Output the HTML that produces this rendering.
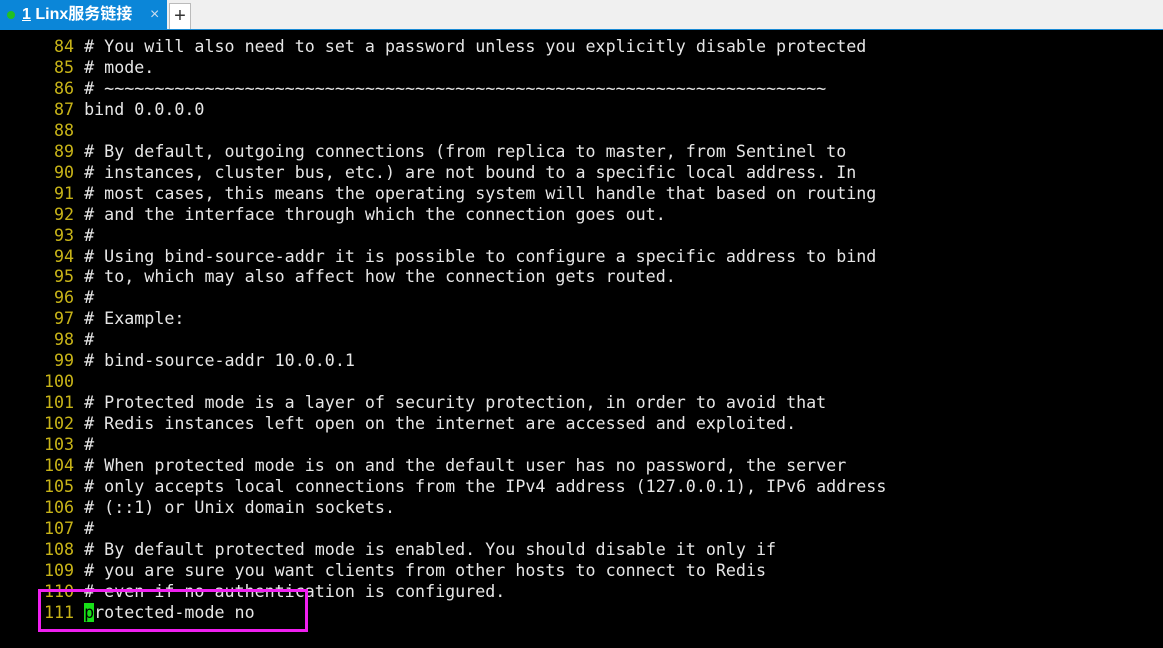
<!DOCTYPE html><html><head><meta charset="utf-8"><style>
body{margin:0;width:1163px;height:648px;background:#000;overflow:hidden;position:relative;font-family:"Liberation Sans","Noto Sans CJK SC",sans-serif}
.bar{position:absolute;left:0;top:0;width:1163px;height:29px;background:#f0f0f0;border-bottom:1px solid #1a8ad4}
.tab{position:absolute;left:0;top:0;width:167px;height:30px;background:#0b86d8;color:#fff;font-weight:bold;font-size:16px;line-height:30px}
.dot{position:absolute;left:7px;top:11px;width:8px;height:8px;border-radius:50%;background:#22c022}
.plus{position:absolute;left:169px;top:3px;width:20px;height:25px;background:#fff;border:1px solid #bbb;border-bottom:none;font-size:20px;line-height:24px;text-align:center;color:#333}
pre{position:absolute;left:44px;top:37px;margin:0;font-family:"DejaVu Sans Mono","Liberation Mono",monospace;font-size:16.67px;line-height:20.96px;color:#e6e6e6}
.n{color:#c8b418}
.cur{background:#18e018;color:#000}
.box{position:absolute;left:38px;top:589px;width:264px;height:37px;border:3px solid #f020f0}
</style></head><body>
<div class="bar"></div>
<div class="tab"><span class="dot"></span><span style="position:absolute;left:22px"><u>1</u> Linx服务链接</span><span style="position:absolute;left:150px;font-weight:normal;color:#cde">×</span></div>
<div class="plus">+</div>
<pre><span class="n"> 84</span> # You will also need to set a password unless you explicitly disable protected
<span class="n"> 85</span> # mode.
<span class="n"> 86</span> # ~~~~~~~~~~~~~~~~~~~~~~~~~~~~~~~~~~~~~~~~~~~~~~~~~~~~~~~~~~~~~~~~~~~~~~~~
<span class="n"> 87</span> bind 0.0.0.0
<span class="n"> 88</span>
<span class="n"> 89</span> # By default, outgoing connections (from replica to master, from Sentinel to
<span class="n"> 90</span> # instances, cluster bus, etc.) are not bound to a specific local address. In
<span class="n"> 91</span> # most cases, this means the operating system will handle that based on routing
<span class="n"> 92</span> # and the interface through which the connection goes out.
<span class="n"> 93</span> #
<span class="n"> 94</span> # Using bind-source-addr it is possible to configure a specific address to bind
<span class="n"> 95</span> # to, which may also affect how the connection gets routed.
<span class="n"> 96</span> #
<span class="n"> 97</span> # Example:
<span class="n"> 98</span> #
<span class="n"> 99</span> # bind-source-addr 10.0.0.1
<span class="n">100</span>
<span class="n">101</span> # Protected mode is a layer of security protection, in order to avoid that
<span class="n">102</span> # Redis instances left open on the internet are accessed and exploited.
<span class="n">103</span> #
<span class="n">104</span> # When protected mode is on and the default user has no password, the server
<span class="n">105</span> # only accepts local connections from the IPv4 address (127.0.0.1), IPv6 address
<span class="n">106</span> # (::1) or Unix domain sockets.
<span class="n">107</span> #
<span class="n">108</span> # By default protected mode is enabled. You should disable it only if
<span class="n">109</span> # you are sure you want clients from other hosts to connect to Redis
<span class="n">110</span> # even if no authentication is configured.
<span class="n">111</span> <span class="cur">p</span>rotected-mode no</pre>
<div class="box"></div>
</body></html>
